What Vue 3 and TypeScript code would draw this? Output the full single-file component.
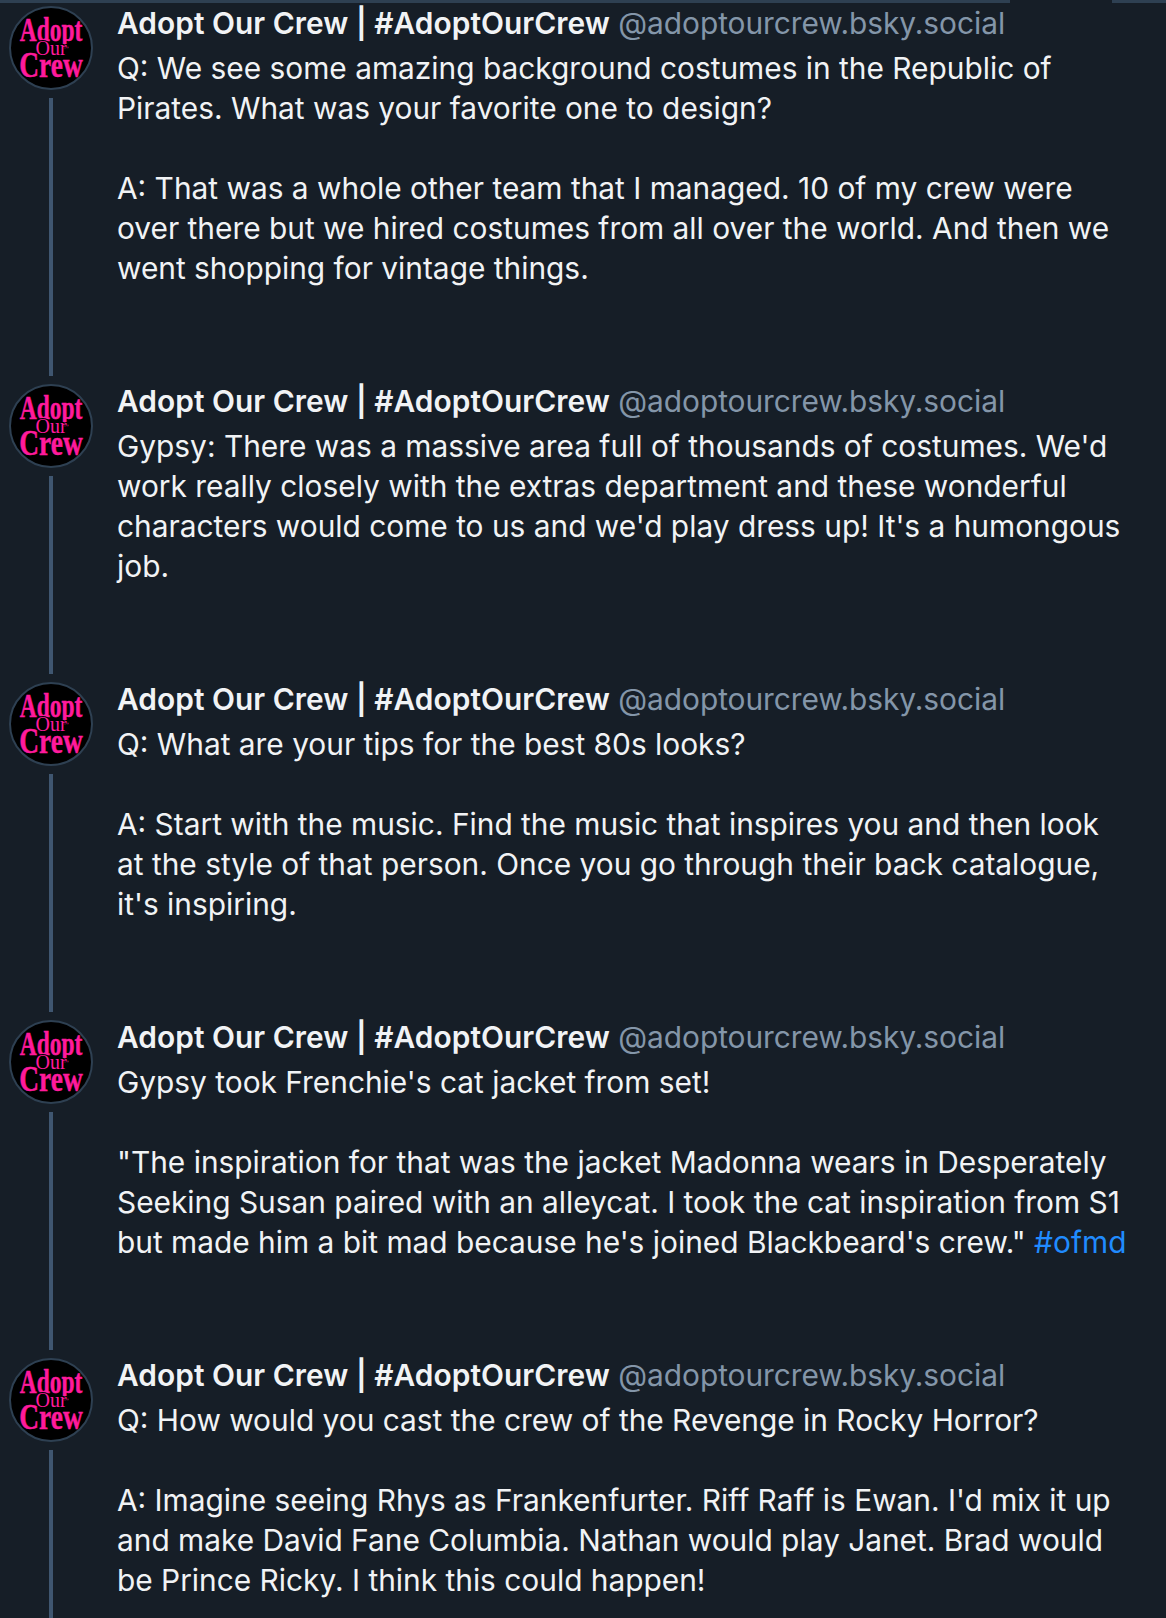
<script setup lang="ts">
interface Seg { t: string; link?: boolean }
interface Post { lines: Seg[][] }
const s = (t: string): Seg[] => [{ t }]
const posts: Post[] = [
  { lines: [s('Q: We see some amazing background costumes in the Republic of'), s('Pirates. What was your favorite one to design?'), s(''), s('A: That was a whole other team that I managed. 10 of my crew were'), s('over there but we hired costumes from all over the world. And then we'), s('went shopping for vintage things.')] },
  { lines: [s("Gypsy: There was a massive area full of thousands of costumes. We'd"), s('work really closely with the extras department and these wonderful'), s("characters would come to us and we'd play dress up! It's a humongous"), s('job.')] },
  { lines: [s('Q: What are your tips for the best 80s looks?'), s(''), s('A: Start with the music. Find the music that inspires you and then look'), s("at the style of that person. Once you go through their back catalogue,"), s("it's inspiring.")] },
  { lines: [s("Gypsy took Frenchie's cat jacket from set!"), s(''), s('"The inspiration for that was the jacket Madonna wears in Desperately'), s('Seeking Susan paired with an alleycat. I took the cat inspiration from S1'), [{ t: "but made him a bit mad because he's joined Blackbeard's crew.\" " }, { t: '#ofmd', link: true }]] },
  { lines: [s('Q: How would you cast the crew of the Revenge in Rocky Horror?'), s(''), s("A: Imagine seeing Rhys as Frankenfurter. Riff Raff is Ewan. I'd mix it up"), s('and make David Fane Columbia. Nathan would play Janet. Brad would'), s('be Prince Ricky. I think this could happen!')] },
]
</script>

<template>
  <div class="page">
    <div class="topbar"><div class="seg-a"></div><div class="seg-b"></div></div>
    <div v-for="(p, i) in posts" :key="i" class="post">
      <div class="rail">
        <svg class="avatar" viewBox="0 0 84 84" role="img" aria-label="Adopt Our Crew">
          <circle cx="42" cy="42" r="41" fill="#000" stroke="#2e4052" stroke-width="2" />
          <g fill="#ff1a9c" stroke="#ff1a9c" stroke-width="0.5" font-family="Liberation Serif, serif" font-weight="700" text-anchor="middle">
            <text transform="translate(42 35) scale(0.69 1)" font-size="34">Adopt</text>
            <text class="our" transform="translate(42 49)" font-size="20" font-weight="400">Our</text>
            <text transform="translate(42 71) scale(0.76 1)" font-size="36">Crew</text>
          </g>
        </svg>
        <div class="line"></div>
      </div>
      <div class="content">
        <div class="head"><span class="name">Adopt Our Crew | #AdoptOurCrew</span> <span class="handle">@adoptourcrew.bsky.social</span></div>
        <div class="body">
          <div v-for="(l, j) in p.lines" :key="j" class="row"><template v-for="(g, k) in l" :key="k"><span :class="{ link: g.link }">{{ g.t }}</span></template></div>
        </div>
      </div>
    </div>
  </div>
</template>

<style>
html, body { margin: 0; background: #161e27; }
</style>

<style scoped>
.page {
  width: 1166px;
  height: 1618px;
  overflow: hidden;
  background: #161e27;
  font-family: Inter, "Noto Sans", sans-serif;
  box-sizing: border-box;
}
.topbar { display: flex; justify-content: space-between; height: 3px; }
.seg-a { width: 1010px; background: #2e4052; }
.seg-b { width: 54px; background: #2e4052; }
.post { display: flex; height: 378px; }
.post:nth-of-type(3) { height: 298px; }
.post:nth-of-type(4), .post:nth-of-type(5) { height: 338px; }
.rail { margin-left: 9px; padding-top: 3px; display: flex; flex-direction: column; align-items: center; width: 84px; flex: none; margin-right: 24px; }
.avatar { width: 84px; height: 84px; flex: none; display: block; }
.our { stroke: #000; stroke-width: 2px; paint-order: stroke; }
.line { width: 4px; flex: 1; margin-top: 8px; margin-bottom: 5px; background: #3f5670; }
.content { flex: 1; min-width: 0; }
.head { font-size: 29.87px; line-height: 40px; white-space: nowrap; }
.name { color: #f1f3f5; font-weight: 600; letter-spacing: 0.04px; }
.handle { color: #8496a9; letter-spacing: -0.04px; }
.body { margin-top: 5px; font-size: 29.87px; line-height: 40px; color: #f1f3f5; }
.row { height: 40px; white-space: pre; }
.link { color: #208bfe; }
</style>
